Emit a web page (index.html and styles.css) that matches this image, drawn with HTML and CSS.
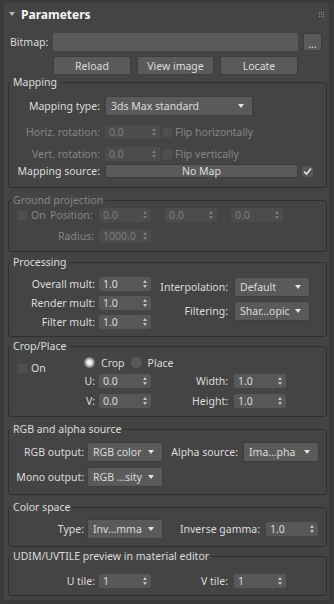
FILE: index.html
```html
<!DOCTYPE html>
<html lang="en">
<head>
  <meta charset="UTF-8">
  <meta name="viewport" content="width=device-width, initial-scale=1.0">
  <title>Bitmap Parameters</title>
  <link rel="stylesheet" href="styles.css">
</head>
<body>
  <div class="panel">
    <div class="head">
      <svg class="caret" width="6" height="4" viewBox="0 0 6 4"><polygon points="0,0 6,0 3,4" fill="#b4b4b4"/></svg>
      <span class="title">Parameters</span>
      <svg class="grip" width="5" height="5" viewBox="0 0 5 5" fill="#8c8c8c">
        <rect x="0" y="0" width="1" height="1"/><rect x="2" y="0" width="1" height="1"/><rect x="4" y="0" width="1" height="1"/>
        <rect x="0" y="2" width="1" height="1"/><rect x="2" y="2" width="1" height="1"/><rect x="4" y="2" width="1" height="1"/>
        <rect x="0" y="4" width="1" height="1"/><rect x="2" y="4" width="1" height="1"/><rect x="4" y="4" width="1" height="1"/>
      </svg>
    </div>

    <div class="bitmap-row">
      <span class="bitmap-label">Bitmap:</span>
      <div class="path"></div>
      <button class="btn btn-dots">...</button>
    </div>

    <div class="btn-row">
      <button class="btn btn-wide">Reload</button>
      <button class="btn btn-mid">View image</button>
      <button class="btn btn-wide">Locate</button>
    </div>

    <fieldset class="group g-mapping">
      <legend>Mapping</legend>
      <div class="row tall">
        <span class="lbl w-map">Mapping type:</span>
        <div class="drop w-type">3ds Max standard</div>
      </div>
      <div class="row r-horiz">
        <span class="lbl w-map dim">Horiz. rotation:</span>
        <div class="spin off w55">0.0</div>
        <span class="chk flip"></span>
        <span class="dim">Flip horizontally</span>
      </div>
      <div class="row r-vert">
        <span class="lbl w-map dim">Vert. rotation:</span>
        <div class="spin off w55">0.0</div>
        <span class="chk flip"></span>
        <span class="dim">Flip vertically</span>
      </div>
      <div class="row r-source">
        <span class="lbl w-map">Mapping source:</span>
        <button class="btn btn-map">No Map</button>
        <span class="chk checked">
          <svg width="11" height="11" viewBox="0 0 11 11"><path d="M2 5.5 L4.5 8 L9 2.5" fill="none" stroke="#e6e6e6" stroke-width="1.6"/></svg>
        </span>
      </div>
    </fieldset>

    <fieldset class="group g-ground">
      <legend class="dim">Ground projection</legend>
      <div class="row">
        <span class="chk-on"><span class="chk"></span><span class="dim">On</span></span>
        <span class="lbl w-pos dim">Position:</span>
        <div class="spin off">0.0</div>
        <div class="spin off gap14">0.0</div>
        <div class="spin off gap14">0.0</div>
      </div>
      <div class="row r-radius">
        <span class="lbl w-rad dim">Radius:</span>
        <div class="spin off">1000.0</div>
      </div>
    </fieldset>

    <fieldset class="group g-proc">
      <legend>Processing</legend>
      <div class="proc">
        <div class="col">
          <div class="row"><span class="lbl w-left">Overall mult:</span><div class="spin">1.0</div></div>
          <div class="row"><span class="lbl w-left">Render mult:</span><div class="spin">1.0</div></div>
          <div class="row"><span class="lbl w-left">Filter mult:</span><div class="spin">1.0</div></div>
        </div>
        <div class="col col-drops">
          <div class="row tall"><span class="lbl w-right">Interpolation:</span><div class="drop w76">Default</div></div>
          <div class="row tall"><span class="lbl w-right">Filtering:</span><div class="drop w76">Shar…opic</div></div>
        </div>
      </div>
    </fieldset>

    <fieldset class="group g-crop">
      <legend>Crop/Place</legend>
      <div class="crop">
        <span class="chk-on crop-on"><span class="chk"></span><span>On</span></span>
        <div class="col">
          <div class="row radios">
            <span class="radio on"></span><span class="radio-text">Crop</span>
            <span class="radio second"></span><span class="radio-text">Place</span>
          </div>
          <div class="row r-uv">
            <span class="lbl w-uv">U:</span><div class="spin">0.0</div>
            <span class="lbl w-right">Width:</span><div class="spin">1.0</div>
          </div>
          <div class="row r-uv">
            <span class="lbl w-uv">V:</span><div class="spin">0.0</div>
            <span class="lbl w-right">Height:</span><div class="spin">1.0</div>
          </div>
        </div>
      </div>
    </fieldset>

    <fieldset class="group g-rgb">
      <legend>RGB and alpha source</legend>
      <div class="row tall">
        <span class="lbl w-out">RGB output:</span><div class="drop w76">RGB color</div>
        <span class="lbl w-alpha">Alpha source:</span><div class="drop w76">Ima…pha</div>
      </div>
      <div class="row tall r-mono">
        <span class="lbl w-out">Mono output:</span><div class="drop w76">RGB …sity</div>
      </div>
    </fieldset>

    <fieldset class="group g-color">
      <legend>Color space</legend>
      <div class="row tall">
        <span class="lbl w-out">Type:</span><div class="drop w76">Inv…mma</div>
        <span class="lbl w-gamma">Inverse gamma:</span><div class="spin">1.0</div>
      </div>
    </fieldset>

    <fieldset class="group g-udim">
      <legend>UDIM/UVTILE preview in material editor</legend>
      <div class="row">
        <span class="lbl w-left">U tile:</span><div class="spin">1</div>
        <span class="lbl w-right">V tile:</span><div class="spin">1</div>
      </div>
    </fieldset>
  </div>
</body>
</html>
```

FILE: styles.css
```css
body {
  margin: 0;
  background: #3b3b3b;
  font-family: "Noto Sans", "Liberation Sans", sans-serif;
  font-size: 10.5px;
  color: #dcdcdc;
}
.panel {
  box-sizing: border-box;
  width: 327px;
  margin: 2px 0 0 3px;
  padding: 0 0 4px 0;
  background: #444444;
  border: 1px solid #393939;
  border-radius: 3px;
}
.head {
  display: flex;
  align-items: center;
  height: 22px;
  padding-left: 5px;
}
.title {
  margin-left: 6px;
  font-size: 12px;
  font-weight: bold;
  color: #f4f4f4;
}
.grip {
  margin-left: auto;
  margin-right: 5px;
}
.bitmap-row {
  display: flex;
  align-items: center;
  margin-top: 8px;
  padding-left: 6px;
}
.bitmap-label {
  width: 43px;
}
.path {
  width: 245px;
  height: 18px;
  background: #5a5a5a;
  border-radius: 2px;
}
.btn {
  box-sizing: border-box;
  padding: 0;
  font: inherit;
  color: #dcdcdc;
  background: #5a5a5a;
  border: 1px solid #3d3d3d;
  border-radius: 2px;
}
.btn-dots {
  width: 19px;
  height: 18px;
  margin-left: 5px;
  line-height: 20px;
}
.btn-row {
  display: flex;
  gap: 6px;
  margin: 5px 0 0 49px;
}
.btn-row .btn {
  height: 19px;
}
.btn-wide { width: 78px; }
.btn-mid { width: 77px; }

/* groups */
.group {
  margin: 0 2px 0 4px;
  padding: 0;
  min-width: 0;
  border: 1px solid #2f2f2f;
  border-radius: 3px;
}
.group legend {
  height: 14px;
  line-height: 14px;
  margin-left: 2px;
  padding: 0 2px;
}
.g-mapping { padding: 7px 0 9px; }
.g-ground { margin-top: 5px; padding: 1px 0 8px; }
.g-proc { margin-top: 3px; padding: 8px 0 7px; }
.g-crop { margin-top: 2px; padding: 4px 0 8px; }
.g-rgb { margin-top: 5px; padding: 6px 0 7px; }
.g-color { margin-top: 5px; padding: 5px 0 7px; }
.g-udim { margin-top: 2px; padding: 11px 0 7px; }

.row {
  display: flex;
  align-items: center;
  height: 14px;
  white-space: nowrap;
}
.row.tall { height: 20px; }
.lbl {
  flex: none;
  text-align: right;
}
.dim { color: #868686; }

.w-map { width: 91px; margin-right: 5px; }
.w-left { width: 86px; margin-right: 4px; }
.w-right { width: 77px; margin-right: 6px; }
.w-pos { width: 41px; margin-right: 8px; }
.w-rad { width: 85px; margin-right: 5px; }
.w-uv { width: 11px; margin-right: 4px; }
.w-out { width: 75px; margin-right: 3px; }
.w-alpha { width: 75px; margin-right: 5px; }
.w-gamma { width: 97px; margin-right: 6px; }

.r-horiz { margin-top: 9px; }
.r-vert { margin-top: 8px; }
.r-source { margin-top: 3px; }
.r-radius { margin-top: 7px; }
.r-uv { margin-top: 6px; }
.r-mono { margin-top: 5px; }

/* spinner */
.spin {
  position: relative;
  flex: none;
  box-sizing: border-box;
  width: 52px;
  height: 14px;
  padding-left: 4px;
  line-height: 14px;
  background: #575757;
  border-radius: 2px;
}
.spin::before,
.spin::after {
  content: "";
  position: absolute;
  right: 4px;
  border-left: 2.5px solid transparent;
  border-right: 2.5px solid transparent;
}
.spin::before {
  top: 3px;
  border-bottom: 3px solid #c4c4c4;
}
.spin::after {
  top: 8px;
  border-top: 3px solid #c4c4c4;
}
.spin.off {
  color: #7e7e7e;
  background: #4c4c4c;
}
.spin.off::before { border-bottom-color: #7a7a7a; }
.spin.off::after { border-top-color: #7a7a7a; }
.w55 { width: 55px; }
.gap14 { margin-left: 14px; }

/* dropdown */
.drop {
  position: relative;
  flex: none;
  box-sizing: border-box;
  height: 20px;
  padding-left: 5px;
  line-height: 18px;
  background: #5a5a5a;
  border: 1px solid #3e3e3e;
  border-radius: 2px;
}
.drop::after {
  content: "";
  position: absolute;
  right: 8px;
  top: 7px;
  border-left: 3px solid transparent;
  border-right: 3px solid transparent;
  border-top: 4px solid #e2e2e2;
}
.w-type { width: 148px; }
.w76 { width: 76px; }

.btn-map {
  width: 193px;
  height: 14px;
  line-height: 12px;
}

/* checkbox / radio */
.chk {
  flex: none;
  box-sizing: border-box;
  width: 11px;
  height: 11px;
  background: #4f4f4f;
  border: 1px solid #474747;
  border-radius: 1px;
}
.chk.flip { margin: 0 2px; }
.chk.checked {
  display: flex;
  margin-left: 4px;
  background: #555555;
  border: none;
}
.chk-on {
  display: flex;
  align-items: center;
  flex: none;
  box-sizing: border-box;
  width: 41px;
  padding-left: 8px;
  gap: 3px;
}
.crop {
  display: grid;
  grid-template-columns: 75px 1fr;
}
.crop-on {
  align-self: start;
  margin-top: 4px;
}
.radios { height: 11px; }
.radio {
  flex: none;
  width: 11px;
  height: 11px;
  border-radius: 50%;
  background: #5a5a5a;
}
.radio.on {
  background: radial-gradient(circle, #f4f4f4 0 2px, #c8c8c8 3px, #6a6a6a 5.5px);
}
.radio.second { margin-left: 6px; }
.radio-text { margin-left: 6px; }

.proc {
  display: grid;
  grid-template-columns: 142px 1fr;
}
.col {
  display: flex;
  flex-direction: column;
  gap: 5px;
}
.col-drops { gap: 4px; }
.crop .col { gap: 0; }
```
